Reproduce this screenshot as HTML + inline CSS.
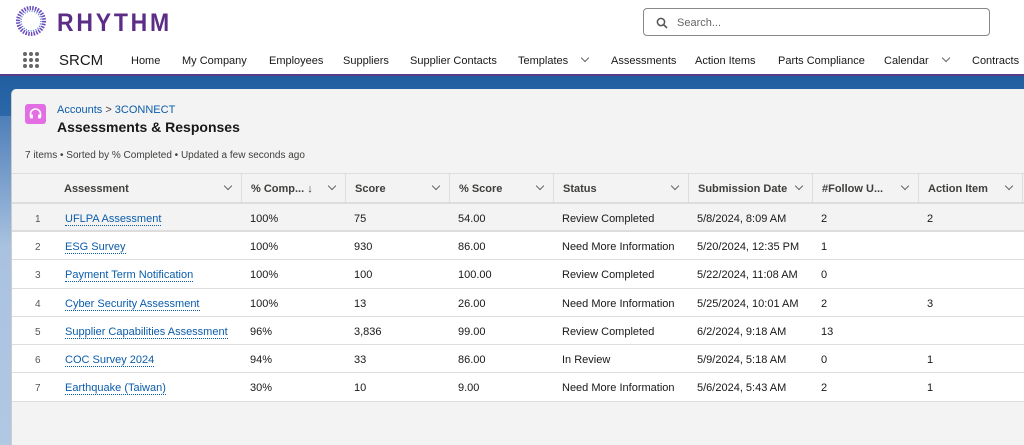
<!DOCTYPE html>
<html><head><meta charset="utf-8"><style>
*{margin:0;padding:0;box-sizing:border-box}
body{width:1024px;height:445px;overflow:hidden;position:relative;background:#b1c8e3;font-family:"Liberation Sans",sans-serif;font-size:11px;color:#181818}
.hdr{position:absolute;left:0;top:0;width:1024px;height:76px;background:#fff;border-bottom:2px solid #5b3a87}
.band{position:absolute;left:0;top:76px;width:1024px;height:40px;background:linear-gradient(#215ea0,#2c68a8)}
.lstrip{position:absolute;left:0;top:116px;width:12px;height:329px;background:linear-gradient(#4e7fb8,#a9c2e0 40%,#b1c8e3)}
.card{position:absolute;left:11px;top:89px;width:1013px;height:356px;background:#f3f3f3;border-radius:5px 0 0 0;border-left:1px solid #ccc}
.logo{position:absolute;left:57px;top:9px;font-size:25px;font-weight:bold;color:#5b2d86;letter-spacing:3px;transform:scaleX(0.92);transform-origin:left}
.search{position:absolute;left:643px;top:8px;width:347px;height:28px;border:1px solid #888;border-radius:4px;color:#666;font-size:11px;padding:8px 0 0 33px}
.nav{position:absolute;top:55px;font-size:11px;color:#181818}
.chev{display:inline-block;width:6px;height:6px;border-right:1.2px solid #666;border-bottom:1.2px solid #666;transform:rotate(45deg);margin-left:12px;position:relative;top:-3px}
.abs{position:absolute}
.th{position:absolute;top:174px;height:29px;border-left:1px solid #ddd;font-weight:bold;font-size:11px;padding:9px 0 0 9px;color:#3e3e3c}
.th .c{position:absolute;right:10px;top:9px}
.row{position:absolute;left:12px;width:1012px;background:#fff;border-bottom:1px solid #ddd}
.cell{position:absolute;font-size:11px}
a{color:#0b5cab;text-decoration:none;border-bottom:1px dotted #0b5cab}
</style></head><body>
<div class="hdr"></div>
<svg class="abs" style="left:14px;top:4px" width="34" height="34" viewBox="0 0 34 34"><circle cx="17" cy="17" r="13" fill="none" stroke="#6a4bbd" stroke-width="4" stroke-dasharray="1.5 1.2"/><circle cx="17" cy="17" r="10" fill="none" stroke="#4b7bd0" stroke-width="1.5" stroke-dasharray="1 1.5"/></svg>
<div class="logo">RHYTHM</div>
<div class="search"><svg class="abs" style="left:12px;top:8px" width="12" height="12" viewBox="0 0 12 12"><circle cx="5" cy="5" r="3.6" fill="none" stroke="#555" stroke-width="1.5"/><path d="M7.8 7.8L11 11" stroke="#555" stroke-width="1.6"/></svg>Search...</div>
<svg class="abs" style="left:22px;top:51px" width="20" height="20"><g fill="#666"><circle cx="3" cy="3" r="2"/><circle cx="9" cy="3" r="2"/><circle cx="15" cy="3" r="2"/><circle cx="3" cy="9" r="2"/><circle cx="9" cy="9" r="2"/><circle cx="15" cy="9" r="2"/><circle cx="3" cy="15" r="2"/><circle cx="9" cy="15" r="2"/><circle cx="15" cy="15" r="2"/></g></svg>
<div class="nav" style="left:59px;top:52px;font-size:15px">SRCM</div>
<div class="nav" style="left:131px">Home</div>
<div class="nav" style="left:182px">My Company</div>
<div class="nav" style="left:269px">Employees</div>
<div class="nav" style="left:343px">Suppliers</div>
<div class="nav" style="left:410px">Supplier Contacts</div>
<div class="nav" style="left:518px">Templates<span class="chev" style="margin-left:14px"></span></div>
<div class="nav" style="left:611px">Assessments</div>
<div class="nav" style="left:695px">Action Items</div>
<div class="nav" style="left:778px">Parts Compliance</div>
<div class="nav" style="left:884px">Calendar<span class="chev" style="margin-left:14px"></span></div>
<div class="nav" style="left:972px">Contracts</div>
<div class="band"></div><div class="lstrip"></div>
<div class="card"></div>
<div class="abs" style="left:25px;top:104px;width:21px;height:20px;background:#e36ee3;border-radius:3px"><svg width="21" height="20" viewBox="0 0 21 20"><path d="M5.5 13V10a5 5 0 0 1 10 0v3" fill="none" stroke="#fff" stroke-width="1.6"/><rect x="5" y="10.5" width="3" height="4" rx="1" fill="#fff"/><rect x="13" y="10.5" width="3" height="4" rx="1" fill="#fff"/></svg></div>
<div class="abs" style="left:57px;top:104px;font-size:11px;color:#0b5cab">Accounts <span style="color:#444">&gt;</span> 3CONNECT</div>
<div class="abs" style="left:57px;top:119px;font-size:14px;font-weight:bold">Assessments &amp; Responses</div>
<div class="abs" style="left:25px;top:150px;font-size:10px;color:#3e3e3c">7 items • Sorted by % Completed • Updated a few seconds ago</div>
<div class="abs" style="left:12px;top:173px;width:1012px;height:31px;border-top:1px solid #ddd;border-bottom:2px solid #ddd"></div>
<div class="th" style="left:55px;width:186px;border-left:none">Assessment<span class="chev c"></span></div>
<div class="th" style="left:241px;width:104px">% Comp... ↓<span class="chev c"></span></div>
<div class="th" style="left:345px;width:104px">Score<span class="chev c"></span></div>
<div class="th" style="left:449px;width:104px">% Score<span class="chev c"></span></div>
<div class="th" style="left:553px;width:135px">Status<span class="chev c"></span></div>
<div class="th" style="left:688px;width:124px">Submission Date<span class="chev c"></span></div>
<div class="th" style="left:812px;width:106px">#Follow U...<span class="chev c"></span></div>
<div class="th" style="left:918px;width:104px">Action Item<span class="chev c"></span></div>
<div class="abs" style="left:1022px;top:174px;width:1px;height:29px;background:#ddd"></div>
<div id="rows"></div>
<script>
var d=[["UFLPA Assessment","100%","75","54.00","Review Completed","5/8/2024, 8:09 AM","2","2"],
["ESG Survey","100%","930","86.00","Need More Information","5/20/2024, 12:35 PM","1",""],
["Payment Term Notification","100%","100","100.00","Review Completed","5/22/2024, 11:08 AM","0",""],
["Cyber Security Assessment","100%","13","26.00","Need More Information","5/25/2024, 10:01 AM","2","3"],
["Supplier Capabilities Assessment","96%","3,836","99.00","Review Completed","6/2/2024, 9:18 AM","13",""],
["COC Survey 2024","94%","33","86.00","In Review","5/9/2024, 5:18 AM","0","1"],
["Earthquake (Taiwan)","30%","10","9.00","Need More Information","5/6/2024, 5:43 AM","2","1"]];
var tops=[204,232,260,289,317,345,373],bot=[231,259,288,316,344,372,401];
var xs=[65,250,354,458,562,697,821,927],h="";
d.forEach(function(r,i){var t=tops[i],hh=bot[i]-t;
h+='<div class="row" style="top:'+t+'px;height:'+(hh+1)+'px;'+(i==0?'background:#f3f3f3;border-bottom:2px solid #ddd':'')+'"></div>';
var y=t+hh/2-5;
h+='<div class="cell" style="left:35px;top:'+(y+1)+'px;color:#555;font-size:10px">'+(i+1)+'</div>';
r.forEach(function(v,j){h+='<div class="cell" style="left:'+xs[j]+'px;top:'+y+'px">'+(j==0?'<a>'+v+'</a>':v)+'</div>';});});
document.getElementById('rows').innerHTML=h;
</script>
</body></html>
